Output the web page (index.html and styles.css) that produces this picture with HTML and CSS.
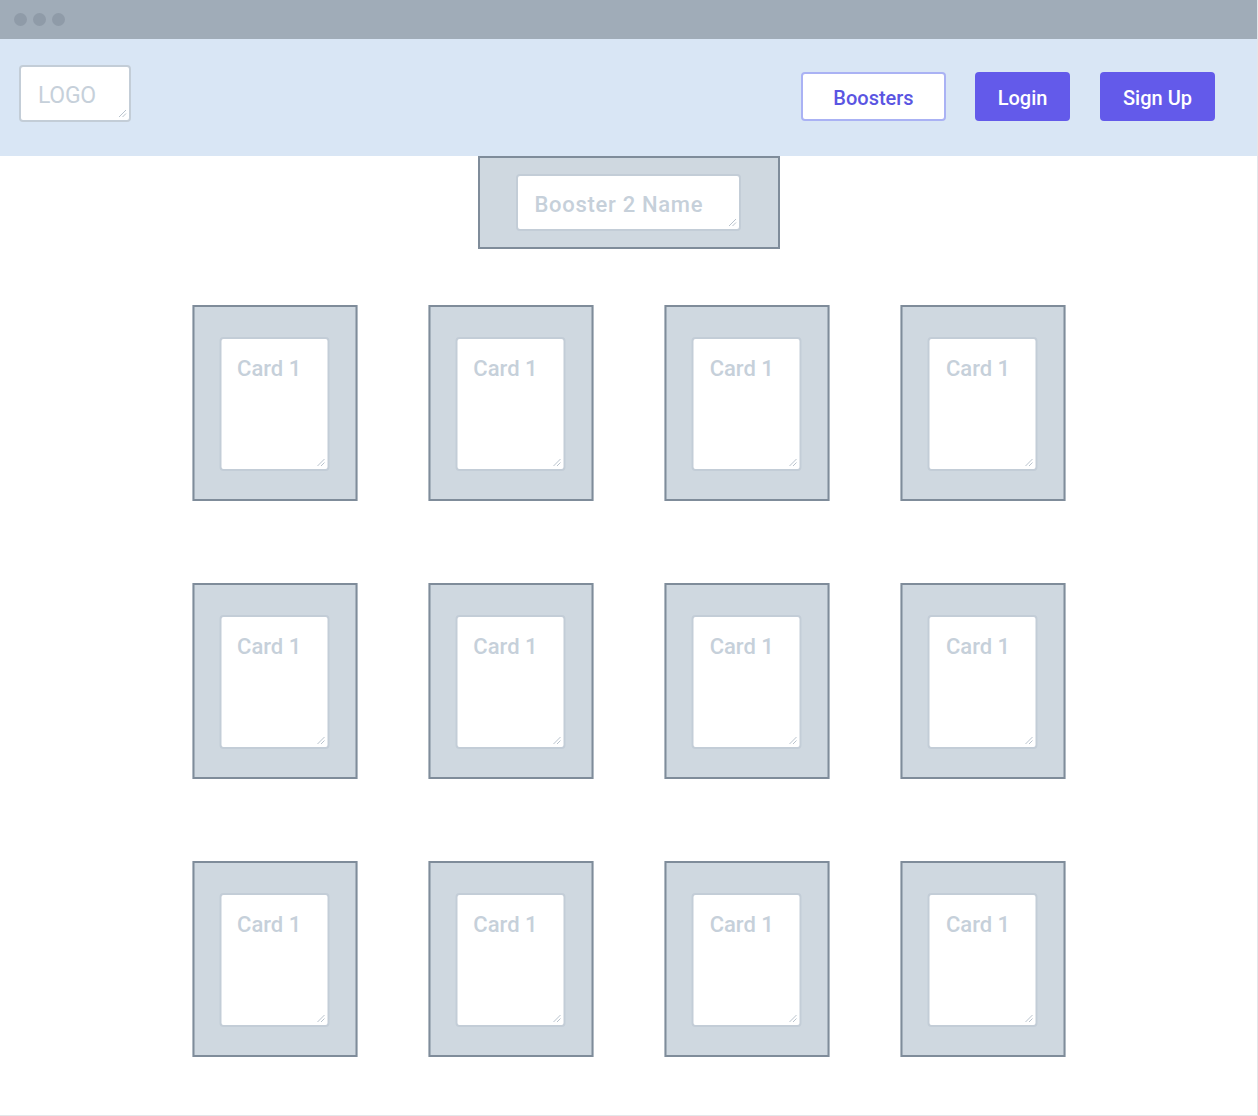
FILE: index.html
```html
<!DOCTYPE html>
<html>
<head>
<meta charset="utf-8">
<link rel="stylesheet" href="styles.css">
</head>
<body>
<div class="window">
  <div class="titlebar">
    <span class="dot"></span><span class="dot"></span><span class="dot"></span>
  </div>
  <header class="header">
    <div class="field logo"><span>LOGO</span><svg class="grip" viewBox="0 0 10 10"><path d="M2 9 L9 2 M5.5 9 L9 5.5"/></svg></div>
    <nav class="nav">
      <button class="btn btn-outline">Boosters</button>
      <button class="btn btn-primary btn-login">Login</button>
      <button class="btn btn-primary btn-signup">Sign Up</button>
    </nav>
  </header>
  <main class="main">
    <div class="panel booster">
      <div class="field booster-name"><span>Booster 2 Name</span><svg class="grip" viewBox="0 0 10 10"><path d="M2 9 L9 2 M5.5 9 L9 5.5"/></svg></div>
    </div>
    <div class="grid" id="grid"></div>
  </main>
</div>
<script src="app.js"></script>
</body>
</html>
```
FILE: app.js
```js
var grid = document.getElementById('grid');
var html = '';
for (var i = 0; i < 12; i++) {
  html += '<div class="panel card"><div class="field card-field"><span>Card 1</span>' +
    '<svg class="grip" viewBox="0 0 10 10"><path d="M2 9 L9 2 M5.5 9 L9 5.5"/></svg></div></div>';
}
grid.innerHTML = html;
```
FILE: styles.css
```css
* { box-sizing: border-box; }
html, body { margin: 0; padding: 0; background: #fff; }
body { font-family: Roboto, "Liberation Sans", sans-serif; }

.window {
  width: 1258px;
  height: 1116px;
  border-right: 1px solid #e4e6e9;
  border-bottom: 1px solid #e4e6e9;
  overflow: hidden;
}

.titlebar {
  height: 39px;
  background: #a0acb8;
  display: flex;
  align-items: center;
  gap: 6px;
  padding-left: 14px;
}
.dot {
  width: 13px;
  height: 13px;
  border-radius: 50%;
  background: #8f9ba8;
}

.header {
  height: 117px;
  background: #d9e6f5;
  display: flex;
  justify-content: space-between;
  align-items: flex-start;
  padding: 26px 42px 0 19px;
}

.field {
  position: relative;
  background: #fff;
  border: 2px solid #c3cdd7;
  border-radius: 4px;
  color: #c6d0da;
  font-weight: 500;
}
.grip {
  position: absolute;
  right: 2px;
  bottom: 2px;
  width: 10px;
  height: 10px;
  fill: none;
  stroke: #b9c3cd;
  stroke-width: 1;
}

.logo {
  width: 112px;
  height: 57px;
  display: flex;
  align-items: center;
  padding: 3px 0 0 17px;
  font-size: 23px;
  font-weight: 400;
  letter-spacing: -0.3px;
}

.nav {
  display: flex;
  gap: 29px;
  padding-top: 7px;
}
.btn {
  height: 49px;
  border-radius: 4px;
  font-family: Roboto, "Liberation Sans", sans-serif;
  font-size: 20px;
  font-weight: 500;
  padding: 2px 0 0;
  cursor: pointer;
}
.btn-outline {
  width: 145px;
  background: #fff;
  border: 2px solid #aab2f4;
  color: #5a55e2;
}
.btn-primary {
  background: #635aea;
  border: none;
  color: #fff;
}
.btn-login { width: 95px; }
.btn-signup { width: 115px; margin-left: 1px; }

.main {
  display: flex;
  flex-direction: column;
  align-items: center;
}

.panel {
  background: #cfd8e0;
  border: 2px solid #7f8c9a;
}

.booster {
  width: 302px;
  height: 93px;
  padding: 16px 0 0 36px;
}
.booster-name {
  width: 225px;
  height: 57px;
  display: flex;
  align-items: center;
  padding: 3px 0 0 17px;
  font-size: 22px;
  letter-spacing: 0.7px;
}

.grid {
  margin-top: 56px;
  display: grid;
  grid-template-columns: repeat(4, 165px);
  column-gap: 71.3px;
  row-gap: 82px;
  transform: translateX(0.5px);
}

.card {
  width: 165px;
  height: 196px;
  padding: 30px 0 0 25px;
}
.card-field {
  width: 110px;
  height: 134px;
  padding: 16px 0 0 16px;
  font-size: 22px;
  line-height: 28px;
}
```
